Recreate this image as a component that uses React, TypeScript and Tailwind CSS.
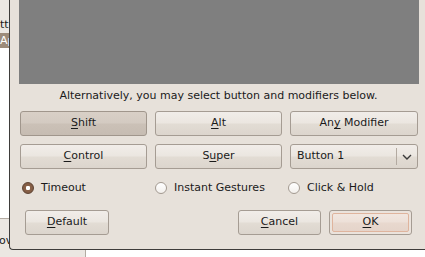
import React from 'react';

const font = { fontFamily: '"DejaVu Sans", Verdana, sans-serif' };

const btn =
  'flex items-center justify-center rounded-[3px] border border-[#a59c93] text-[11px] text-[#1a1a1a] bg-[linear-gradient(180deg,#f1ede9_0%,#ebe6e0_48%,#e2dcd4_52%,#dcd5cd_100%)]';
const btnPressed =
  'flex items-center justify-center rounded-[3px] border border-[#a0968c] text-[11px] text-[#1a1a1a] bg-[linear-gradient(180deg,#d9d0c7_0%,#d3cac1_48%,#cbc1b7_52%,#c6bcb2_100%)]';

const Mn: React.FC<{ children: React.ReactNode }> = ({ children }) => (
  <span className="underline underline-offset-2 decoration-1">{children}</span>
);

const Radio: React.FC<{ checked?: boolean; label: string; className?: string }> = ({ checked, label, className }) => (
  <div className={`flex items-center gap-[7px] ${className ?? ''}`}>
    {checked ? (
      <span className="w-[12px] h-[12px] rounded-full border border-[#5e4332] bg-[radial-gradient(circle,#ffffff_0%,#ffffff_28%,#8a6248_34%,#7a5540_100%)]" />
    ) : (
      <span className="w-[12px] h-[12px] rounded-full border border-[#a39a91] bg-[linear-gradient(180deg,#ffffff,#f3f0ec)]" />
    )}
    <span className="text-[11px] text-[#1a1a1a]">{label}</span>
  </div>
);

export default function App() {
  return (
    <div className="relative w-[425px] h-[257px] overflow-hidden bg-white" style={font}>
      {/* window behind the dialog */}
      <div className="absolute left-0 top-0 w-[20px] h-full flex flex-col">
        <div className="h-[20px] bg-[#ece8e3]" />
        <div className="h-[13px] bg-[#ece8e3] text-[11px] leading-[10px] text-[#1a1a1a]">tt</div>
        <div className="h-[15px] bg-[#9c8b7a] text-[11px] leading-[15px] text-white">Ap</div>
        <div className="flex-1 bg-white" />
      </div>
      <div className="absolute left-0 top-[218px] w-[86px] h-[45px] border-t border-r border-[#b3aba2] bg-[#ebe7e2] text-[11px] text-[#1a1a1a] pt-[14px] -indent-[1px]">ov</div>

      {/* dialog */}
      <div className="absolute left-[9px] top-[-6px] w-[430px] h-[256px] border-l border-b border-[#3e3c3a] rounded-bl-[4px] bg-[#e7e1da] flex flex-col pl-[10px]">
        <div className="-ml-px w-[400px] h-[90px] bg-[#7f7f7f]" />
        <div className="w-[398px] flex flex-col">
          <div className="h-[22px] flex items-center justify-center text-[11px] text-[#1a1a1a] pt-[3px] -ml-[1px]">
            Alternatively, you may select button and modifiers below.
          </div>
          <div className="grid grid-cols-[127px_127px_128px] gap-x-[8px] gap-y-[8px] mt-[5px]">
            <div className={`${btnPressed} h-[25px]`}>
              <span><Mn>S</Mn>hift</span>
            </div>
            <div className={`${btn} h-[25px]`}>
              <span><Mn>A</Mn>lt</span>
            </div>
            <div className={`${btn} h-[25px]`}>
              <span>An<Mn>y</Mn> Modifier</span>
            </div>
            <div className={`${btn} h-[25px]`}>
              <span><Mn>C</Mn>ontrol</span>
            </div>
            <div className={`${btn} h-[25px]`}>
              <span>S<Mn>u</Mn>per</span>
            </div>
            <div className={`${btn} h-[25px] !justify-start`}>
              <span className="flex-1 pl-[6px]">Button 1</span>
              <span className="w-px h-[17px] bg-[#b3aaa1]" />
              <span className="w-[20px] flex items-center justify-center">
                <svg width="10" height="6" viewBox="0 0 10 6">
                  <path d="M1 1 L5 5 L9 1" fill="none" stroke="#3a3a3a" strokeWidth="1.4" />
                </svg>
              </span>
            </div>
          </div>
          <div className="flex items-center h-[14px] mt-[12px]">
            <Radio checked label="Timeout" className="ml-[2px] w-[133px]" />
            <Radio label="Instant Gestures" className="w-[133px]" />
            <Radio label="Click & Hold" />
          </div>
          <div className="flex items-center mt-[15px]">
            <div className={`${btn} w-[84px] h-[25px] ml-[5px]`}>
              <span><Mn>D</Mn>efault</span>
            </div>
            <div className="flex-1" />
            <div className={`${btn} w-[83px] h-[25px]`}>
              <span><Mn>C</Mn>ancel</span>
            </div>
            <div className="w-[83px] h-[25px] ml-[8px] mr-[6px] rounded-[3px] border border-[#a59c93] p-[2px] bg-[#ebe3dc]">
              <div className="w-full h-full flex items-center justify-center rounded-[2px] border border-[#dfb49d] text-[11px] text-[#1a1a1a] bg-[linear-gradient(180deg,#f1e6df_0%,#ede0d8_48%,#e8d8ce_52%,#e5d4ca_100%)]">
                <span><Mn>O</Mn>K</span>
              </div>
            </div>
          </div>
        </div>
      </div>
    </div>
  );
}
